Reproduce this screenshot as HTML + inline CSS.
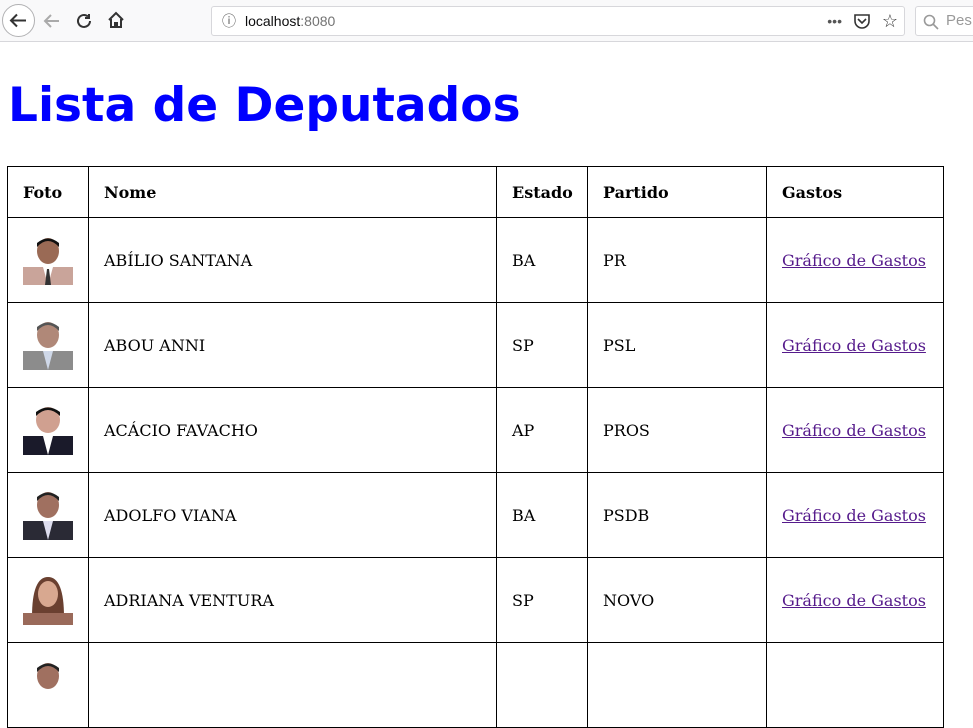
<!DOCTYPE html>
<html><head><meta charset="utf-8"><style>
*{margin:0;padding:0;box-sizing:border-box}
html,body{width:973px;height:672px;overflow:hidden;background:#fff;font-family:"DejaVu Serif","Liberation Serif",serif;}
.chrome{position:absolute;left:0;top:0;width:973px;height:42px;background:#f9f9fa;border-bottom:1px solid #d7d7db;font-family:"Liberation Sans",sans-serif}
.back{position:absolute;left:2px;top:4px;width:33px;height:33px;border:1px solid #b1b1b3;border-radius:50%;background:#fff}
.url{position:absolute;left:211px;top:6px;width:694px;height:30px;background:#fff;border:1px solid #d7d7db;border-radius:3px;font-size:14px;line-height:28px;padding-left:33px;color:#0c0c0d}
.search{position:absolute;left:915px;top:6px;width:70px;height:30px;background:#fff;border:1px solid #d7d7db;border-radius:3px;font-size:15px;line-height:28px;padding-left:30px;color:#999}
h1{position:absolute;left:8px;top:74px;font-family:"DejaVu Sans",sans-serif;font-weight:bold;font-size:47px;color:#00f;line-height:64px}
table{position:absolute;left:7px;top:166px;border-collapse:collapse;font-size:16px;table-layout:fixed;width:936px}
td,th{border:1px solid #000;padding:0 15px;text-align:left;vertical-align:middle;white-space:nowrap}
th.e,td.e{padding-right:0}
th{height:51px}
td{height:85px}
a{color:#551a8b}
.ph{width:50px;height:50px;display:block;position:relative;overflow:hidden;background:#fff}
</style></head><body>
<div class="chrome">
<div class="back"><svg width="31" height="31" viewBox="0 0 31 31"><path d="M23 15.5H9M14 9.5l-6 6 6 6" stroke="#333" stroke-width="2" fill="none"/></svg></div>
<svg style="position:absolute;left:42px;top:12px" width="20" height="18"><path d="M17 9H3M9 3l-6 6 6 6" stroke="#aaa" stroke-width="2" fill="none"/></svg>
<svg style="position:absolute;left:76px;top:12px" width="18" height="18"><path d="M14 9a6 6 0 1 1-2-4.5M13 2v4h-4" stroke="#333" stroke-width="2" fill="none"/></svg>
<svg style="position:absolute;left:107px;top:11px" width="18" height="18"><path d="M2 9l7-7 7 7M4 8v8h4v-4h2v4h4V8" stroke="#333" stroke-width="2" fill="none"/></svg>
<div class="url"><span style="position:absolute;left:10px;color:#555">ⓘ</span>localhost<span style="color:#737373">:8080</span>
<span style="position:absolute;right:62px;color:#555">•••</span>
<svg style="position:absolute;right:34px;top:7px" width="16" height="15"><path d="M1 1h14v6a7 7 0 0 1-14 0z M4 5l4 4 4-4" stroke="#333" stroke-width="1.6" fill="none"/></svg>
<span style="position:absolute;right:6px;font-size:18px;color:#333">☆</span></div>
<div class="search"><svg style="position:absolute;left:7px;top:7px" width="16" height="16"><circle cx="6.5" cy="6.5" r="5" stroke="#999" stroke-width="1.6" fill="none"/><path d="M10 10l5 5" stroke="#999" stroke-width="1.6"/></svg>Pes</div>
</div>
<h1>Lista de Deputados</h1>
<table>
<colgroup><col style="width:81px"><col style="width:408px"><col style="width:91px"><col style="width:179px"><col style="width:177px"></colgroup>
<tr><th>Foto</th><th>Nome</th><th class="e">Estado</th><th>Partido</th><th>Gastos</th></tr>
<tr><td><div class="ph"><svg width="50" height="50"><rect y="32" width="50" height="18" fill="#c9a49a"/><ellipse cx="25" cy="16" rx="11" ry="13" fill="#9a6a55"/><path d="M14 12q11-12 22 0v-4q-11-9-22 0z" fill="#111"/><path d="M20 32l5 18 5-18z" fill="#fff"/><path d="M24 34h2l2 16h-6z" fill="#333"/></svg></div></td><td>ABÍLIO SANTANA</td><td class="e">BA</td><td>PR</td><td><a href="#">Gráfico de Gastos</a></td></tr>
<tr><td><div class="ph"><svg width="50" height="50"><rect y="31" width="50" height="19" fill="#8c8c8c"/><ellipse cx="25" cy="15" rx="11" ry="13" fill="#b08878"/><path d="M14 11q11-12 22 0v-4q-11-9-22 0z" fill="#555"/><path d="M20 31l5 19 5-19z" fill="#cfd8e8"/></svg></div></td><td>ABOU ANNI</td><td class="e">SP</td><td>PSL</td><td><a href="#">Gráfico de Gastos</a></td></tr>
<tr><td><div class="ph"><svg width="50" height="50"><rect y="31" width="50" height="19" fill="#1a1a2a"/><ellipse cx="25" cy="15" rx="12" ry="13" fill="#d0a090"/><path d="M13 11q12-12 24 0v-4q-12-9-24 0z" fill="#111"/><path d="M20 31l5 19 5-19z" fill="#fff"/></svg></div></td><td>ACÁCIO FAVACHO</td><td class="e">AP</td><td>PROS</td><td><a href="#">Gráfico de Gastos</a></td></tr>
<tr><td><div class="ph"><svg width="50" height="50"><rect y="31" width="50" height="19" fill="#2a2a35"/><ellipse cx="25" cy="15" rx="11" ry="13" fill="#a07060"/><path d="M14 11q11-12 22 0v-4q-11-9-22 0z" fill="#222"/><path d="M20 31l5 19 5-19z" fill="#dde"/></svg></div></td><td>ADOLFO VIANA</td><td class="e">BA</td><td>PSDB</td><td><a href="#">Gráfico de Gastos</a></td></tr>
<tr><td><div class="ph"><svg width="50" height="50"><path d="M9 42q0-40 16-40t16 40z" fill="#6a4030"/><rect y="38" width="50" height="12" fill="#9a6a5a"/><ellipse cx="25" cy="19" rx="10" ry="13" fill="#d8a890"/></svg></div></td><td>ADRIANA VENTURA</td><td class="e">SP</td><td>NOVO</td><td><a href="#">Gráfico de Gastos</a></td></tr>
<tr><td><div class="ph"><svg width="50" height="50"><ellipse cx="25" cy="16" rx="11" ry="13" fill="#a07060"/><path d="M14 12q11-12 22 0v-4q-11-9-22 0z" fill="#222"/></svg></div></td><td></td><td class="e"></td><td></td><td></td></tr>
</table>
</body></html>
